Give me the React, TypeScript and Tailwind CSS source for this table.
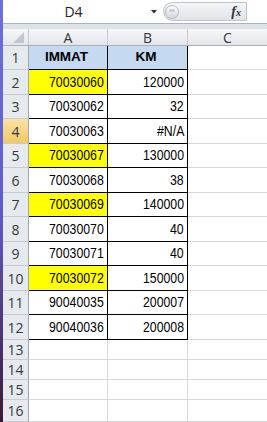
import clsx from "clsx";

// --- data: worksheet rows 1-12 ---
const rows = [
  { a: "IMMAT", b: "KM", head: true },
  { a: "70030060", b: "120000", yellow: true },
  { a: "70030062", b: "32" },
  { a: "70030063", b: "#N/A" },
  { a: "70030067", b: "130000", yellow: true },
  { a: "70030068", b: "38" },
  { a: "70030069", b: "140000", yellow: true },
  { a: "70030070", b: "40" },
  { a: "70030071", b: "40" },
  { a: "70030072", b: "150000", yellow: true },
  { a: "90040035", b: "200007", low: true },
  { a: "90040036", b: "200008", low: true },
];

const emptyRows = [13, 14, 15, 16];

function RowHeader({ n, active }: { n: number; active?: boolean }) {
  return (
    <div
      className={clsx(
        "w-[26px] shrink-0 flex items-center justify-center border-r border-b border-r-[#9ea6b1] border-b-[#c7ccd3] text-[14px] text-[#333a44] font-['Open_Sans',sans-serif]",
        active
          ? "bg-gradient-to-b from-[#fbe1a3] to-[#f4c862]"
          : "bg-[#e6e9ee]"
      )}
    >
      {n}
    </div>
  );
}

// narrow digits like the sheet's font
function Num({ children }: { children: React.ReactNode }) {
  return (
    <span className="inline-block scale-x-[0.82] origin-right whitespace-nowrap">
      {children}
    </span>
  );
}

export default function App() {
  return (
    <div className="w-[267px] h-[422px] overflow-hidden flex bg-white select-none">
      {/* window edge */}
      <div className="w-[3px] shrink-0 bg-gradient-to-b from-[#6b72da] via-[#5f5cc8] to-[#3b1838]" />

      <div className="flex-1 flex flex-col min-w-0">
        {/* --- formula bar --- */}
        <div className="h-[24px] shrink-0 flex items-center bg-white border-b border-[#aab4c1]">
          <div className="w-[141px] text-center text-[14px] text-[#222] font-['Open_Sans',sans-serif]">
            D4
          </div>
          <div className="w-[19px] flex items-center justify-center">
            <svg width="6" height="4" viewBox="0 0 6 4">
              <path d="M0 0 H6 L3 3.5 Z" fill="#333" />
            </svg>
          </div>
          <div className="w-[84px] h-[19px] flex items-center justify-between rounded-l-full border border-[#bcc4ce] bg-gradient-to-b from-[#f4f6f8] to-[#dfe3e8] pl-[1px] pr-[5px]">
            <div className="w-[14px] h-[14px] rounded-full border border-[#b3bac4] bg-gradient-to-b from-[#fdfdfd] to-[#d3d8de] flex items-start justify-center pt-[3px]">
              <div className="w-[6px] h-[3px] rounded-full bg-[#c9ced5]" />
            </div>
            <span className="text-[14px] italic font-bold text-[#333] font-['Liberation_Serif',serif] leading-none">
              f<span className="text-[10px]">x</span>
            </span>
          </div>
          <div className="flex-1 h-[19px] bg-white" />
        </div>

        <div className="h-[5px] shrink-0 bg-[#dde2e8]" />

        {/* --- column headers --- */}
        <div className="h-[17px] shrink-0 flex text-[14px] text-[#333a44] font-['Open_Sans',sans-serif] border-b border-[#a7aeb8]">
          <div className="w-[26px] shrink-0 flex items-end justify-end pr-[4px] pb-[2px] border-r border-[#c5cad1] bg-gradient-to-b from-[#f6f7f8] to-[#e3e6ea]">
            <svg width="11" height="11" viewBox="0 0 11 11">
              <path d="M11 0 V11 H0 Z" fill="#c3c7cd" />
            </svg>
          </div>
          {["A", "B"].map((c) => (
            <div
              key={c}
              className={clsx(
                "shrink-0 flex items-center justify-center border-r border-[#c5cad1] bg-gradient-to-b from-[#f6f7f8] to-[#e3e6ea]",
                c === "A" ? "w-[79px]" : "w-[80px]"
              )}
            >
              {c}
            </div>
          ))}
          <div className="flex-1 flex items-center justify-center bg-gradient-to-b from-[#f6f7f8] to-[#e3e6ea]">
            C
          </div>
        </div>

        {/* --- data rows --- */}
        {rows.map((r, i) => (
          <div
            key={i}
            className={clsx("shrink-0 flex", i % 2 === 0 ? "h-[24px]" : "h-[25px]")}
          >
            <RowHeader n={i + 1} active={i === 3} />
            <div
              className={clsx(
                "w-[79px] shrink-0 flex items-center border-r border-b border-black pr-[3px] text-black font-['Liberation_Sans',sans-serif]",
                r.head
                  ? "justify-center bg-[#c5d9f1] font-bold text-[13.5px]"
                  : "justify-end text-[15px]",
                r.yellow && "bg-[#ffff00]"
              )}
            >
              {r.head ? r.a : <Num>{r.a}</Num>}
            </div>
            <div
              className={clsx(
                "w-[80px] shrink-0 flex border-r border-b border-black pr-[3px] text-black font-['Liberation_Sans',sans-serif]",
                r.head
                  ? "items-center justify-center bg-[#c5d9f1] font-bold text-[13.5px]"
                  : "justify-end text-[15px]",
                !r.head && (r.low ? "items-end pb-[1px]" : "items-center")
              )}
            >
              {r.head ? r.b : <Num>{r.b}</Num>}
            </div>
            <div className="flex-1 border-b border-[#d8d8d8]" />
          </div>
        ))}

        {/* --- empty rows --- */}
        {emptyRows.map((n) => (
          <div
            key={n}
            className={clsx("shrink-0 flex", n === 16 ? "h-[22px]" : "h-[20px]")}
          >
            <RowHeader n={n} />
            <div className="w-[79px] shrink-0 border-r border-b border-[#d8d8d8]" />
            <div className="w-[80px] shrink-0 border-r border-b border-[#d8d8d8]" />
            <div className="flex-1 border-b border-[#d8d8d8]" />
          </div>
        ))}
      </div>
    </div>
  );
}
